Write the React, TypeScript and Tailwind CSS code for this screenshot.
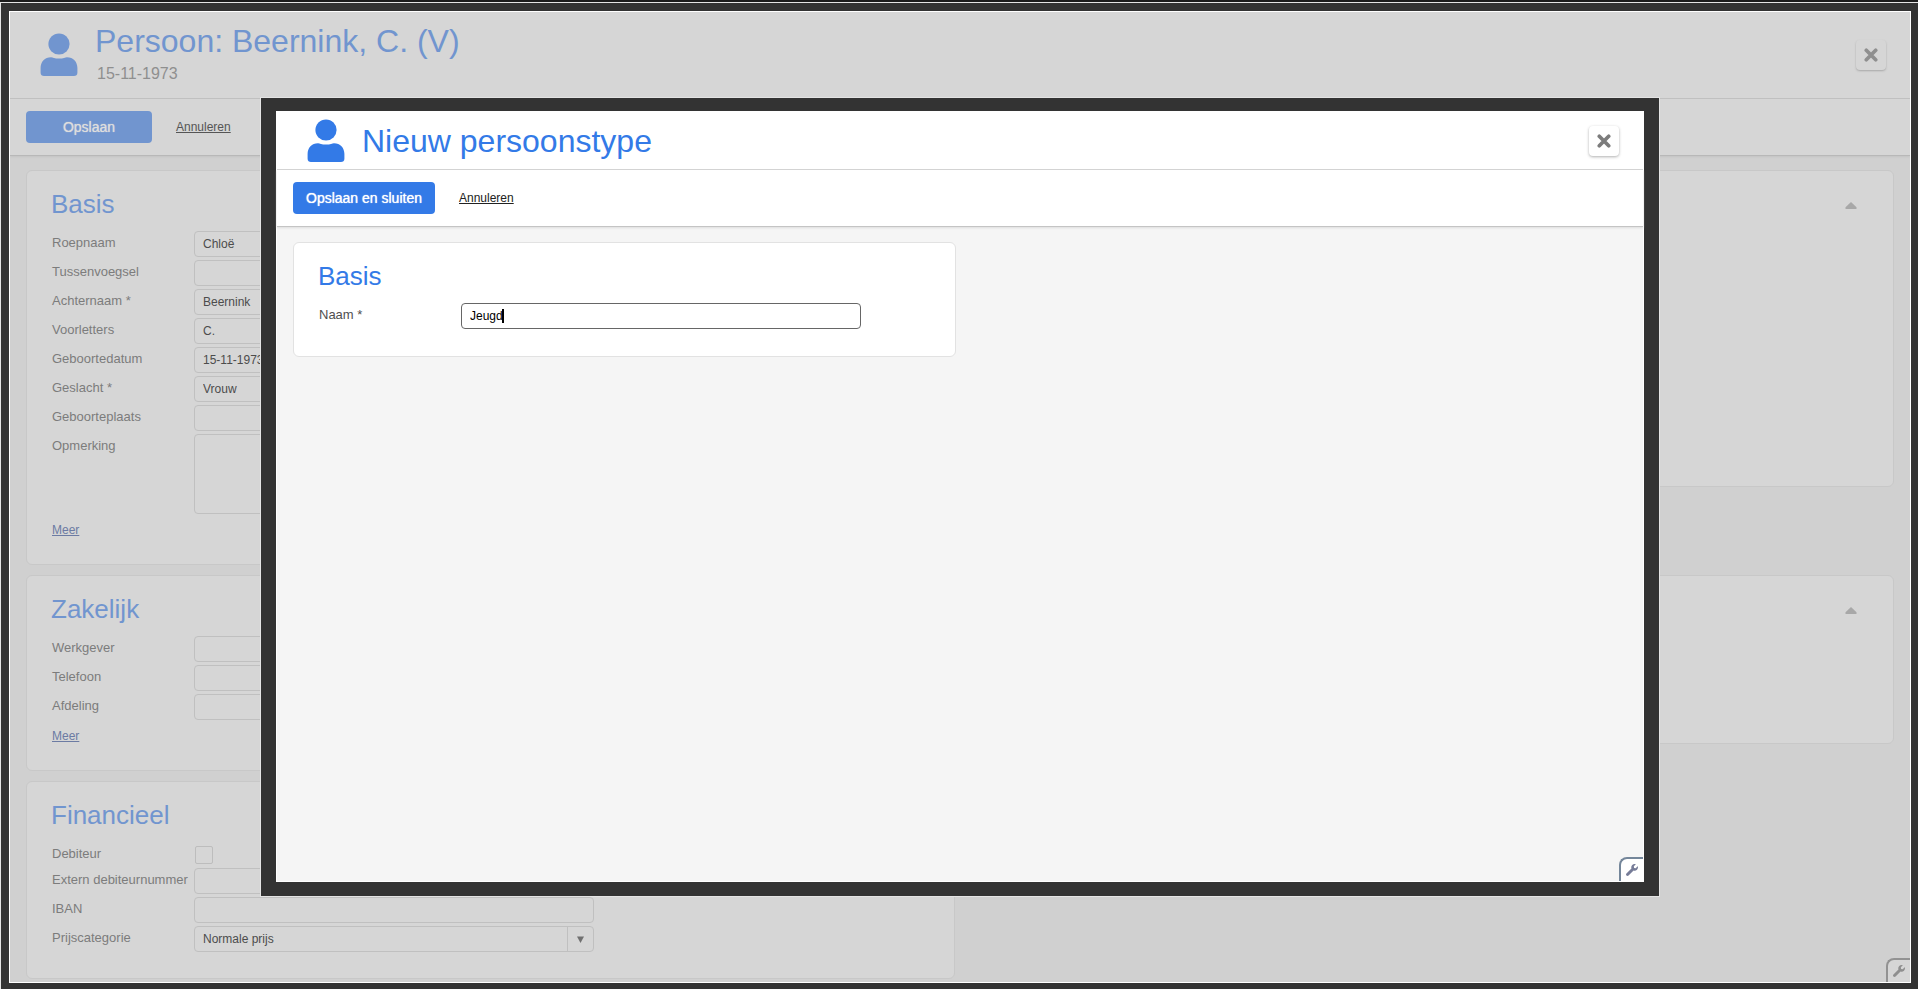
import React, { useId } from "react";

function PersonIcon({ className }: { className: string }) {
  return (
    <svg viewBox="0 0 38 44" className={"h-11 w-[38px] shrink-0 " + className} fill="currentColor" aria-hidden="true">
      <circle cx="19" cy="11" r="10.6" />
      <path d="M11 24.2c1.7 0 3.6 1.4 8 1.4s6.300-1.400 8-1.400c6.200 0 10.400 4.600 10.400 10.600v5c0 2.100-1.400 3.300-3.400 3.300H4c-2 0-3.400-1.200-3.400-3.300v-5c0-6 4.200-10.600 10.400-10.600z" />
    </svg>
  );
}

function CloseButton({ tone, label }: { tone: string; label: string }) {
  return (
    <button
      type="button"
      aria-label={label}
      className={"flex size-[30px] shrink-0 items-center justify-center rounded " + tone}
    >
      <svg viewBox="0 0 14 14" className="size-3.5" fill="none" stroke="currentColor" strokeWidth="3.7" strokeLinecap="round" aria-hidden="true">
        <path d="M2.300 2.300 11.700 11.700M11.700 2.300 2.300 11.700" />
      </svg>
    </button>
  );
}

function WrenchButton({ tone, label }: { tone: string; label: string }) {
  return (
    <button
      type="button"
      aria-label={label}
      className={"absolute right-0 bottom-0 flex size-6 items-center justify-center rounded-tl-lg border-t-2 border-l-2 " + tone}
    >
      <svg viewBox="0 0 512 512" className="size-3" fill="currentColor" aria-hidden="true">
        <path d="M507.730 109.100c-2.240-9.030-13.540-12.090-20.120-5.510l-74.360 74.360-67.880-11.310-11.310-67.880 74.360-74.360c6.620-6.620 3.430-17.900-5.660-20.160-47.380-11.740-99.550.910-136.580 37.930-39.640 39.640-50.550 97.100-34.050 147.200L18.740 402.760c-24.990 24.990-24.990 65.510 0 90.500 24.990 24.990 65.510 24.990 90.500 0l213.210-213.210c50.120 16.710 107.470 5.680 147.370-34.220 37.070-37.070 49.700-89.320 37.910-136.730z" />
      </svg>
    </button>
  );
}

const boxClass = "w-[400px] rounded border border-[#c0c0c0] bg-[#d6d6d6] px-2 text-xs text-[#4c4c4c] outline-none";

function Row({ label, children }: { label: string; children: (id: string) => React.ReactNode }) {
  const id = useId();
  return (
    <div className="mb-[3px] flex items-start pl-px">
      <label htmlFor={id} className="w-[142px] shrink-0 pt-1 text-[13px] leading-4 whitespace-nowrap text-[#7c7c7c]">
        {label}
      </label>
      {children(id)}
    </div>
  );
}

function TextRow({ label, value = "" }: { label: string; value?: string }) {
  return (
    <Row label={label}>
      {(id) => <input id={id} type="text" defaultValue={value} className={"h-[26px] " + boxClass} />}
    </Row>
  );
}

function Panel({ title, className = "", children }: { title: string; className?: string; children: React.ReactNode }) {
  return (
    <section className={"rounded-md border border-[#c8c8c8] bg-[#d6d6d6] px-6 pt-[17px] " + className}>
      <h2 className="mb-[11px] text-[26px] leading-8 text-[#7195cf]">{title}</h2>
      {children}
    </section>
  );
}

function MoreLink() {
  return (
    <a href="#meer" className="mt-0.5 ml-px inline-block text-xs leading-4 text-[#6c7ba3] underline">
      Meer
    </a>
  );
}

function CollapsedPanel({ label, className }: { label: string; className: string }) {
  return (
    <section className={"flex items-start justify-end rounded-md border border-[#c8c8c8] bg-[#d6d6d6] pt-[31px] pr-9 " + className}>
      <button type="button" aria-label={label} className="text-[#a8a8a8]">
        <svg viewBox="0 0 12 7" className="h-[7px] w-3" fill="currentColor" aria-hidden="true">
          <path d="M6 0 11.500 5.200V7H.500V5.200z" />
        </svg>
      </button>
    </section>
  );
}

function PersonPage() {
  return (
    <div className="relative flex min-h-0 flex-1 flex-col overflow-hidden border border-white bg-[#d0d0d0]">
      <header className="flex h-[87px] shrink-0 items-start justify-between border-b border-[#c0c0c0] bg-[#d6d6d6] pr-6 pl-[30px]">
        <div className="flex">
          <PersonIcon className="mt-[21px] text-[#7195cf]" />
          <div className="pt-[9px] pl-[17px]">
            <h1 className="text-[32px] leading-10 text-[#7195cf]">Persoon: Beernink, C. (V)</h1>
            <p className="pt-px pl-0.5 text-base leading-6 text-[#8f8f8f]">15-11-1973</p>
          </div>
        </div>
        <div className="pt-7">
          <CloseButton label="Persoon sluiten" tone="text-[#8f8f8f] bg-[#d6d6d6] shadow-[0_1px_2px_#a8a8a8]" />
        </div>
      </header>
      <div className="flex h-[57px] shrink-0 items-center gap-6 border-b border-[#b8b8b8] bg-[#d6d6d6] px-4 shadow-[0_1px_2px_#c4c4c4]">
        <button type="button" className="h-8 w-[126px] rounded bg-[#7195cf] text-sm text-[#dddddd] [text-shadow:0_0_1px_#dddddd]">
          Opslaan
        </button>
        <a href="#annuleren" className="text-xs text-[#555555] underline">Annuleren</a>
      </div>
      <main className="grid grid-cols-2 items-start gap-x-[10px] pt-[14px] pr-4 pl-4">
        <div className="flex flex-col gap-[10px]">
          <Panel title="Basis" className="h-[395px]">
            <TextRow label="Roepnaam" value="Chloë" />
            <TextRow label="Tussenvoegsel" />
            <TextRow label="Achternaam *" value="Beernink" />
            <TextRow label="Voorletters" value="C." />
            <TextRow label="Geboortedatum" value="15-11-1973" />
            <TextRow label="Geslacht *" value="Vrouw" />
            <TextRow label="Geboorteplaats" />
            <Row label="Opmerking">
              {(id) => <textarea id={id} className={"block h-20 resize-none " + boxClass} />}
            </Row>
            <MoreLink />
          </Panel>
          <Panel title="Zakelijk" className="h-[196px]">
            <TextRow label="Werkgever" />
            <TextRow label="Telefoon" />
            <TextRow label="Afdeling" />
            <MoreLink />
          </Panel>
          <Panel title="Financieel" className="h-[198px]">
            <div className="-mb-[3px]">
              <Row label="Debiteur">
                {(id) => (
                  <input
                    id={id}
                    type="checkbox"
                    className="mt-1 mb-1 ml-px size-[18px] appearance-none rounded-xs border border-[#bdbdbd]"
                  />
                )}
              </Row>
            </div>
            <TextRow label="Extern debiteurnummer" />
            <TextRow label="IBAN" />
            <Row label="Prijscategorie">
              {(id) => (
                <div className="relative">
                  <select id={id} className={"block h-[26px] appearance-none " + boxClass}>
                    <option>Normale prijs</option>
                  </select>
                  <span className="pointer-events-none absolute inset-y-px right-px flex w-[26px] items-center justify-center border-l border-[#c0c0c0] text-[#707070]">
                    <svg viewBox="0 0 7 7" className="size-[7px]" fill="currentColor" aria-hidden="true">
                      <path d="M0 .5h7L3.500 7z" />
                    </svg>
                  </span>
                </div>
              )}
            </Row>
          </Panel>
        </div>
        <div className="flex flex-col gap-[88px]">
          <CollapsedPanel label="Basis inklappen" className="h-[317px]" />
          <CollapsedPanel label="Zakelijk inklappen" className="h-[169px]" />
        </div>
      </main>
      <WrenchButton label="Pagina instellen" tone="border-[#929292] bg-[#d6d6d6] text-[#8f8f8f]" />
    </div>
  );
}

function TypeDialog() {
  return (
    <div
      role="dialog"
      aria-labelledby="dialog-title"
      className="absolute top-[95px] right-[258px] bottom-[92px] left-[260px] flex border border-[#e4e4e4] bg-[#333333] px-[15px] pt-[13px] pb-[14px]"
    >
      <div className="relative flex flex-1 flex-col border border-white bg-[#f5f5f5]">
        <header className="flex h-[58px] shrink-0 items-center justify-between border-b border-[#d2d2d2] bg-white pr-6 pl-[30px]">
          <div className="flex items-center gap-[17px]">
            <PersonIcon className="text-[#337ae7]" />
            <h1 id="dialog-title" className="text-[32px] leading-10 text-[#337ae7]">Nieuw persoonstype</h1>
          </div>
          <CloseButton label="Venster sluiten" tone="text-[#7c7c7c] bg-white shadow-[0_1px_3px_#b0b0b0]" />
        </header>
        <div className="flex h-[57px] shrink-0 items-center gap-6 border-b border-[#c4c4c4] bg-white px-4 shadow-[0_1px_2px_#dddddd]">
          <button type="button" className="h-8 w-[142px] rounded bg-[#337ae7] text-sm text-white [text-shadow:0_0_1px_#ffffff]">
            Opslaan en sluiten
          </button>
          <a href="#annuleren" className="text-xs text-[#222222] underline">Annuleren</a>
        </div>
        <main className="flex px-4 pt-[15px]">
          <section className="h-[115px] w-[663px] rounded-md border border-[#e2e2e2] bg-white px-6 pt-[17px]">
            <h2 className="mb-[11px] text-[26px] leading-8 text-[#337ae7]">Basis</h2>
            <div className="flex items-start pl-px">
              <label htmlFor="naam" className="w-[142px] shrink-0 pt-1 text-[13px] leading-4 text-[#4f4f4f]">
                Naam *
              </label>
              <div className="relative">
                <input
                  id="naam"
                  type="text"
                  defaultValue="Jeugd"
                  className="block h-[26px] w-[400px] rounded border border-[#666666] bg-white px-2 text-xs text-black outline-none"
                />
                <span className="absolute top-1.5 left-[41px] h-3.5 w-0.5 bg-black" />
              </div>
            </div>
          </section>
        </main>
        <WrenchButton label="Venster instellen" tone="border-[#74869a] bg-white text-[#767c98]" />
      </div>
    </div>
  );
}

export default function App() {
  return (
    <div
      className="relative flex h-screen flex-col overflow-hidden border-t-2 border-[#1c1c1c] bg-[#333333]"
      style={{ fontFamily: '"Liberation Sans", Arial, sans-serif' }}
    >
      <div className="flex min-h-0 flex-1 flex-col border-t border-l border-[#e4e4e4] pt-2 pr-[7px] pb-1.5 pl-2">
        <PersonPage />
      </div>
      <TypeDialog />
    </div>
  );
}
